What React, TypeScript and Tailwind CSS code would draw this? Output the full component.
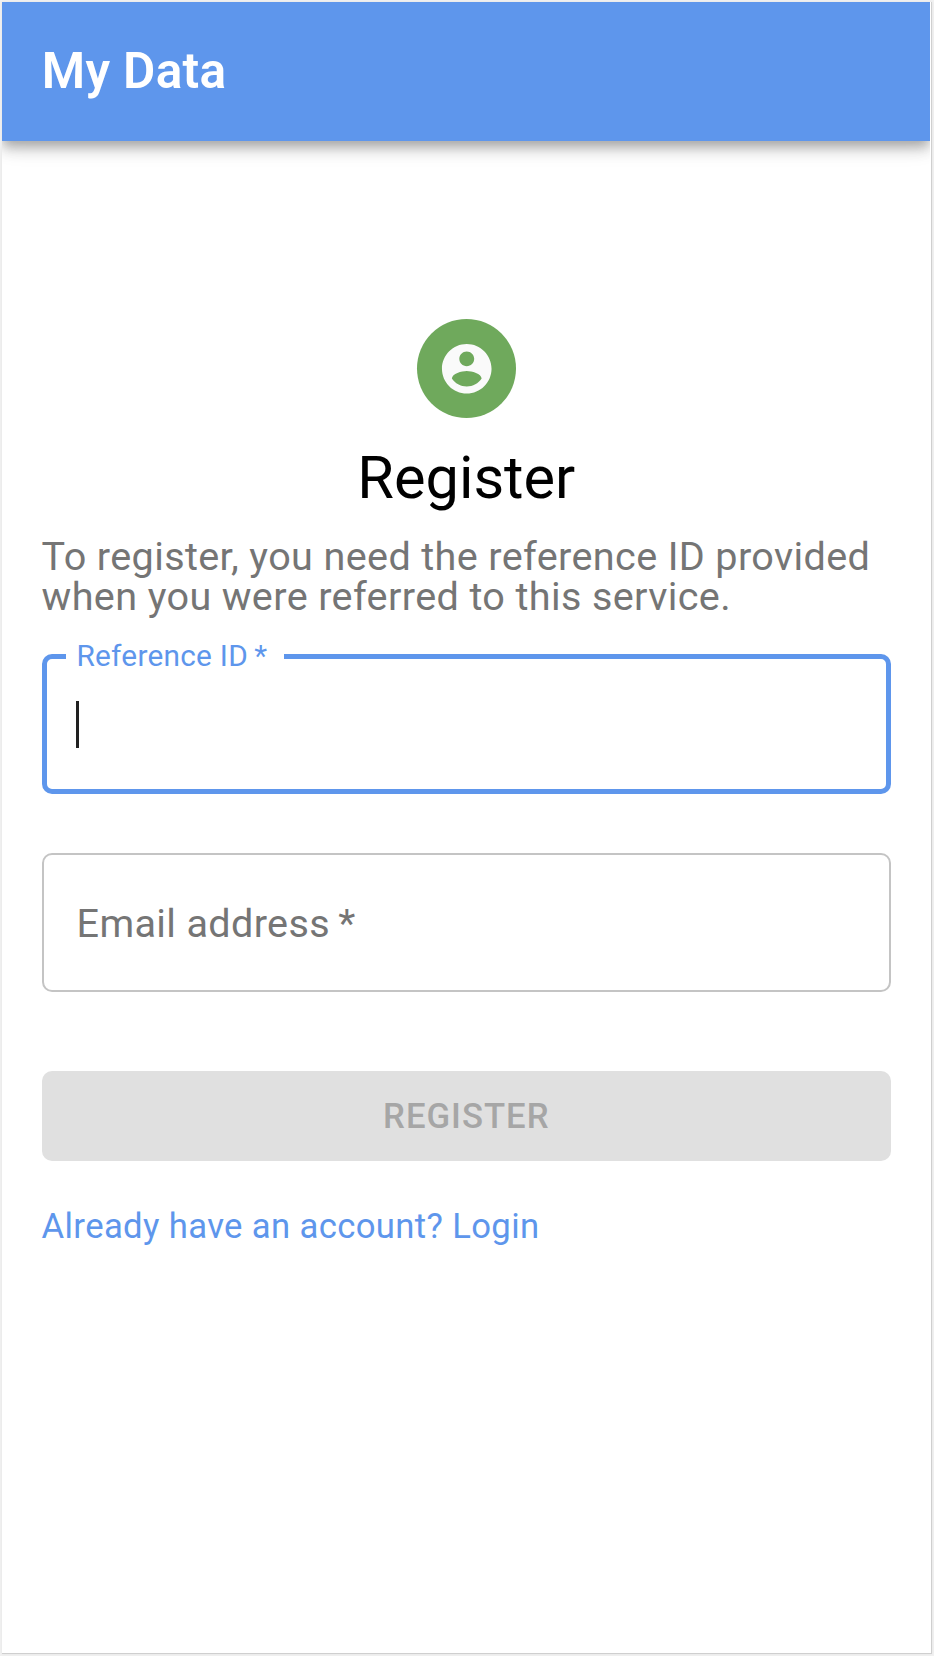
import React from "react";

function AccountIcon() {
  return (
    <svg viewBox="0 0 24 24" className="size-[59.5px] fill-[#fafafa]" aria-hidden="true">
      <path d="M12 2C6.48 2 2 6.48 2 12s4.48 10 10 10 10-4.48 10-10S17.52 2 12 2zm0 3c1.66 0 3 1.34 3 3s-1.34 3-3 3-3-1.34-3-3 1.34-3 3-3zm0 14.2c-2.5 0-4.71-1.28-6-3.22.03-1.99 4-3.08 6-3.08 1.99 0 5.97 1.09 6 3.08-1.29 1.94-3.5 3.22-6 3.22z" />
    </svg>
  );
}

export default function App() {
  return (
    <div className="h-[1656px] w-[934px] overflow-hidden bg-[#f1f1f1] pl-[2px] pt-[2px] font-[Roboto,sans-serif]">
      <div className="flex h-[1652px] w-[930px] flex-col border-b border-r border-[#cfcfcf] bg-white shadow-[0_0_3px_rgba(0,0,0,0.06)]">
        <header className="flex h-[138.6px] w-[928px] shrink-0 items-center bg-[#5e96ec] px-[39.7px] shadow-[0_5px_10px_-2px_rgba(0,0,0,0.2),0_10px_12px_0_rgba(0,0,0,0.14),0_2px_25px_0_rgba(0,0,0,0.12)] [clip-path:inset(0_0_-60px_0)]">
          <h1 className="text-[49.6px] font-semibold leading-[79px] tracking-[0.0065em] text-white">My Data</h1>
        </header>

        <main className="flex flex-col pl-[39.6px] pr-[40px] pt-[178.2px]">
          <div className="flex size-[99px] items-center justify-center self-center rounded-full bg-[#6fa95c]">
            <AccountIcon />
          </div>
          <h2 className="mt-[20.8px] self-center text-[59.5px] leading-[79px] text-black">Register</h2>
          <p className="mt-[19px] whitespace-nowrap text-[39.6px] leading-[40px] tracking-[0.0093em] text-[#757575]">
            To register, you need the reference ID provided
            <br />
            when you were referred to this service.
          </p>

          <fieldset className="mt-[21.2px] h-[156px] rounded-[10px] border-[5px] border-[#5e96ec] pl-[19.8px]">
            <legend className="h-[38px] whitespace-nowrap pl-[10px] pr-[17px] text-[29.8px] leading-[36px] tracking-[0.0087em] text-[#5e96ec]">
              Reference ID&thinsp;*
            </legend>
            <div className="ml-[10px] mt-[25.2px] h-[47.5px] w-[3px] bg-[#212121]" />
          </fieldset>

          <div className="mt-[59.6px] flex h-[138.5px] items-center rounded-[10px] border-2 border-[#c4c4c4] px-[33px]">
            <span className="pt-px text-[39.6px] leading-[47px] tracking-[0.0087em] text-[#757575]">Email address&thinsp;*</span>
          </div>

          <button
            type="button"
            disabled
            className="mt-[79.2px] h-[90px] rounded-[10px] bg-[#e0e0e0] text-[34.7px] font-medium leading-[61px] tracking-[0.02857em] text-[#a6a6a6]"
          >
            REGISTER
          </button>
          <a href="#login" className="mt-[40px] self-start text-[34.7px] leading-[50px] tracking-[0.0101em] text-[#5e96ec]">
            Already have an account? Login
          </a>
        </main>
      </div>
    </div>
  );
}
